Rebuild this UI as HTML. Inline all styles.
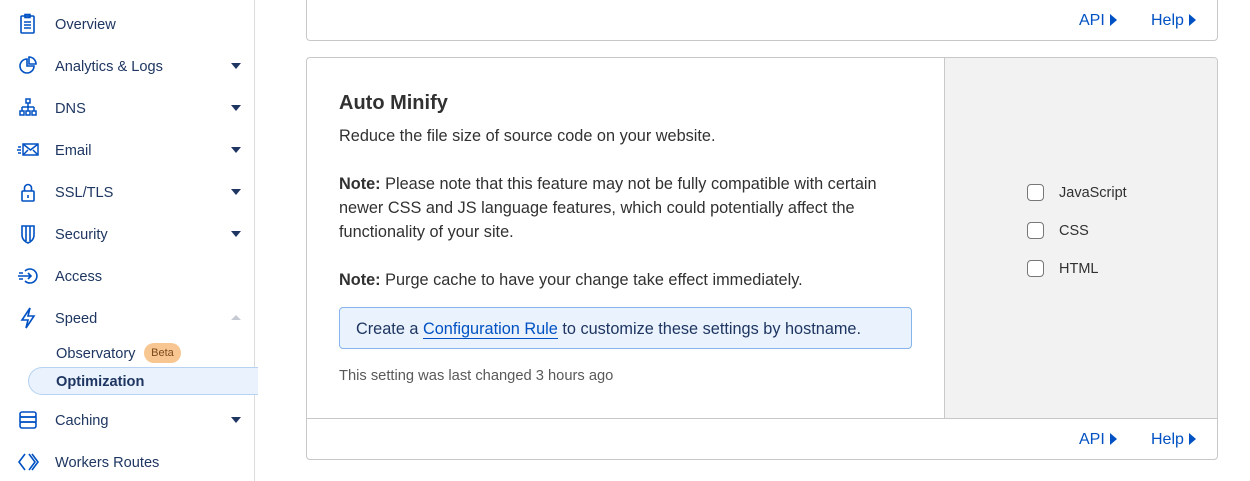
<!DOCTYPE html>
<html><head><style>
*{margin:0;padding:0;box-sizing:border-box}
body{width:1250px;height:481px;overflow:hidden;background:#fff;font-family:"Liberation Sans",sans-serif;position:relative}
.side{position:absolute;left:0;top:0;width:255px;height:481px;border-right:1px solid #dcdcdc;background:#fff}
.it{position:absolute;left:55px;font-size:14.6px;color:#1e3661;line-height:20px}
.ic{position:absolute;left:17px;width:22px;height:22px}
.car{position:absolute;left:231px;width:0;height:0;border-left:5px solid transparent;border-right:5px solid transparent;border-top:6px solid #1e3661}
.card{position:absolute;left:306px;width:912px;border:1px solid #c8c8c8;border-radius:4px;background:#fff}
.lnk{position:absolute;font-size:16px;color:#0051c3}
.tri{display:inline-block;width:0;height:0;border-top:6px solid transparent;border-bottom:6px solid transparent;border-left:7px solid #0051c3;margin-left:5px;vertical-align:-1px}
.txt{position:absolute;left:339px;font-size:16.3px;color:#313131;line-height:24px}
.cb{position:absolute;left:1027px;width:17px;height:17px;border:1.3px solid #777;border-radius:4px;background:#fff}
.cl{position:absolute;left:1059px;font-size:14.5px;color:#313131}
</style></head><body>
<div class="side">
<svg class="ic" style="top:13px" viewBox="0 0 22 22" fill="none" stroke="#0051c3" stroke-width="1.6"><rect x="4" y="3" width="13" height="17" rx="1"/><rect x="8" y="1.5" width="5" height="3"/><path d="M7 9h7M7 12h7M7 15h7"/></svg>
<div class="it" style="top:15px">Overview</div>
<svg class="ic" style="top:55px" viewBox="0 0 22 22" fill="none" stroke="#0051c3" stroke-width="1.6"><path d="M10 4a7 7 0 1 0 7 7h-7z"/><path d="M12 2a7 7 0 0 1 7 7h-7z"/></svg>
<div class="it" style="top:57px">Analytics &amp; Logs</div><div class="car" style="top:63px"></div>
<svg class="ic" style="top:97px" viewBox="0 0 22 22" fill="none" stroke="#0051c3" stroke-width="1.5"><rect x="9" y="2" width="4" height="4"/><path d="M11 6v4M5 10h12M5 10v4M11 10v4M17 10v4"/><rect x="3" y="14" width="4" height="4"/><rect x="9" y="14" width="4" height="4"/><rect x="15" y="14" width="4" height="4"/></svg>
<div class="it" style="top:99px">DNS</div><div class="car" style="top:105px"></div>
<svg class="ic" style="top:139px" viewBox="0 0 22 22" fill="none" stroke="#0051c3" stroke-width="1.5"><rect x="6" y="5" width="15" height="11"/><path d="M6 5l7.5 6L21 5M6 16l5-5M21 16l-5-5M1 8h3M0 11h4M1 14h3"/></svg>
<div class="it" style="top:141px">Email</div><div class="car" style="top:147px"></div>
<svg class="ic" style="top:181px" viewBox="0 0 22 22" fill="none" stroke="#0051c3" stroke-width="1.6"><rect x="5" y="10" width="12" height="10" rx="1"/><path d="M7.5 10V7a3.5 3.5 0 0 1 7 0v3M11 14v3"/></svg>
<div class="it" style="top:183px">SSL/TLS</div><div class="car" style="top:189px"></div>
<svg class="ic" style="top:223px" viewBox="0 0 22 22" fill="none" stroke="#0051c3" stroke-width="1.6"><path d="M5 3h12v9c0 4-3 7-6 8-3-1-6-4-6-8z"/><path d="M9 3v15M13 3v15"/></svg>
<div class="it" style="top:225px">Security</div><div class="car" style="top:231px"></div>
<svg class="ic" style="top:265px" viewBox="0 0 22 22" fill="none" stroke="#0051c3" stroke-width="1.6"><path d="M8 6a7 7 0 1 1 0 10"/><path d="M1 11h13M11 8l3 3-3 3M2 8h4M2 14h4"/></svg>
<div class="it" style="top:267px">Access</div>
<svg class="ic" style="top:307px" viewBox="0 0 22 22" fill="none" stroke="#0051c3" stroke-width="1.6"><path d="M13 1L5 13h6l-2 8 8-12h-6z"/></svg>
<div class="it" style="top:309px">Speed</div>
<div style="position:absolute;left:231px;top:315px;border-left:5px solid transparent;border-right:5px solid transparent;border-bottom:5px solid #c5cad3"></div>
<div class="it" style="top:344px;left:56px">Observatory</div>
<div style="position:absolute;left:144px;top:343px;width:37px;height:20px;border-radius:10px;background:#f8c690;color:#7a4a1c;font-size:11px;line-height:20px;text-align:center">Beta</div>
<div style="position:absolute;left:28px;top:367px;width:230px;height:28px;border:1px solid #b7d2f3;border-right:none;border-radius:14px 0 0 14px;background:#e9f2fd"></div>
<div class="it" style="top:372px;left:56px;font-weight:bold">Optimization</div>
<svg class="ic" style="top:409px" viewBox="0 0 22 22" fill="none" stroke="#0051c3" stroke-width="1.6"><rect x="3" y="3" width="16" height="5" rx="2"/><rect x="3" y="8" width="16" height="5"/><rect x="3" y="13" width="16" height="6" rx="2"/></svg>
<div class="it" style="top:411px">Caching</div><div class="car" style="top:417px"></div>
<svg class="ic" style="top:451px" viewBox="0 0 22 22" fill="none" stroke="#0051c3" stroke-width="1.6"><path d="M8 3L2 11l6 8M12 3l6 8-6 8M15 3l6 8-6 8"/></svg>
<div class="it" style="top:453px">Workers Routes</div>
</div>

<div class="card" style="top:-5px;height:46px"></div>
<div class="lnk" style="left:1079px;top:12px">API<span class="tri"></span></div>
<div class="lnk" style="left:1151px;top:12px">Help<span class="tri"></span></div>

<div class="card" style="top:57px;height:403px;overflow:hidden">
<div style="position:absolute;left:637px;top:0;width:274px;height:361px;background:#f2f2f2;border-left:1px solid #c8c8c8"></div>
<div style="position:absolute;left:0;top:360px;width:912px;height:1px;background:#c8c8c8"></div>
</div>
<div style="position:absolute;left:339px;top:92px;font-size:20px;color:#313131;font-weight:bold">Auto Minify</div>
<div class="txt" style="top:124px">Reduce the file size of source code on your website.</div>
<div class="txt" style="top:172px;width:560px"><b>Note:</b> Please note that this feature may not be fully compatible with certain newer CSS and JS language features, which could potentially affect the functionality of your site.</div>
<div class="txt" style="top:268px"><b>Note:</b> Purge cache to have your change take effect immediately.</div>
<div style="position:absolute;left:339px;top:307px;width:573px;height:42px;border:1px solid #86b4eb;border-radius:4px;background:#eaf2fd;font-size:16.3px;color:#1e3661;padding:11px 16px;line-height:21px">Create a <span style="color:#0051c3;border-bottom:1.5px solid #0051c3">Configuration Rule</span> to customize these settings by hostname.</div>
<div style="position:absolute;left:339px;top:368px;font-size:14.7px;color:#595959">This setting was last changed 3 hours ago</div>
<div class="cb" style="top:184px"></div><div class="cl" style="top:185px">JavaScript</div>
<div class="cb" style="top:222px"></div><div class="cl" style="top:223px">CSS</div>
<div class="cb" style="top:260px"></div><div class="cl" style="top:261px">HTML</div>
<div class="lnk" style="left:1079px;top:431px">API<span class="tri"></span></div>
<div class="lnk" style="left:1151px;top:431px">Help<span class="tri"></span></div>
</body></html>
